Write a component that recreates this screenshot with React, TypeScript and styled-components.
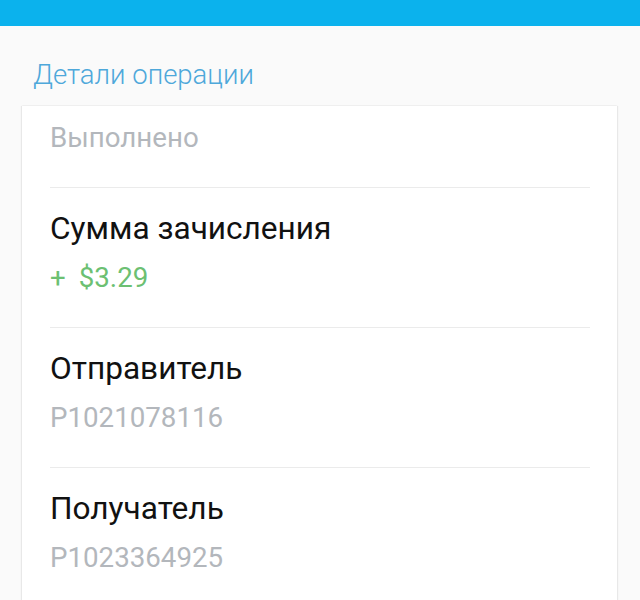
import styled, { createGlobalStyle } from 'styled-components';

const GlobalStyle = createGlobalStyle`
	html, body {
		margin: 0;
		padding: 0;
		background: #fafafa;
		overflow: hidden;
	}

	body {
		font-family: Roboto, 'Noto Sans', sans-serif;
		-webkit-font-smoothing: antialiased;
	}
`;

const TopBar = styled.header`
	height: 26px;
	background-color: #0bb2ed;
`;

const Page = styled.main`
	padding: 34px 22px 0 22px;
`;

const Title = styled.h1`
	margin: 0 0 16px 11px;
	font-size: 27.5px;
	font-weight: 300;
	line-height: 30px;
	color: #4ea8da;
`;

const Card = styled.section`
	background: #fff;
	margin-right: 1px;
	box-shadow: -1px 0 1px rgba(0, 0, 0, 0.07), 1px 0 1px rgba(0, 0, 0, 0.07), 0 -1px 1px rgba(0, 0, 0, 0.02);
	padding: 0 27px 0 28px;
`;

const Row = styled.div<{ $first?: boolean }>`
	display: flex;
	flex-direction: column;
	gap: 15px;
	padding: ${({ $first }) => ($first ? '16px' : '22px')} 0 33px;
	border-bottom: 1px solid #ebebeb;
`;

const Label = styled.div`
	font-size: 31.6px;
	line-height: 37px;
	color: #111;
`;

const Value = styled.div<{ $tone?: 'muted' | 'positive' }>`
	font-size: 27.7px;
	line-height: 32px;
	color: ${({ $tone }) => ($tone === 'positive' ? '#6cc072' : '#b3b7bc')};
`;

const Sign = styled.span`
	margin-right: 13px;
`;

const App = () => {
	const rows = [
		{ label: 'Отправитель', value: 'P1021078116' },
		{ label: 'Получатель', value: 'P1023364925' },
	];

	return (
		<>
			<GlobalStyle />
			<TopBar />
			<Page>
				<Title>Детали операции</Title>
				<Card>
					<Row $first>
						<Value $tone='muted'>Выполнено</Value>
					</Row>
					<Row>
						<Label>Сумма зачисления</Label>
						<Value $tone='positive'>
							<Sign>+</Sign>$3.29
						</Value>
					</Row>
					{rows.map(row => (
						<Row key={row.label}>
							<Label>{row.label}</Label>
							<Value $tone='muted'>{row.value}</Value>
						</Row>
					))}
				</Card>
			</Page>
		</>
	);
};

export default App;
